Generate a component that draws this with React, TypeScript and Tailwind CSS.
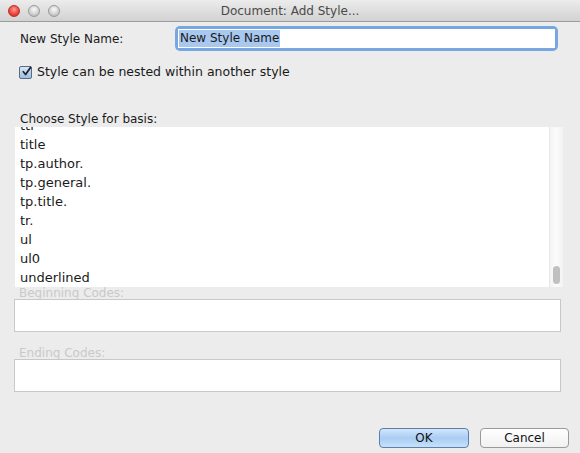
import React from "react";

const ITEMS = ["ttl", "title", "tp.author.", "tp.general.", "tp.title.", "tr.", "ul", "ul0", "underlined"];

function TrafficLight({ color }: { color: "red" | "gray" }) {
  return (
    <span
      className={`block h-[12px] w-[12px] rounded-full border ${
        color === "red"
          ? "border-[#b3312c] bg-[radial-gradient(circle_at_50%_35%,#ff9c94_0%,#f0463c_55%,#c4241c_100%)]"
          : "border-[#9a9a9a] bg-[radial-gradient(circle_at_50%_35%,#fafafa_0%,#d2d2d2_55%,#a9a9a9_100%)]"
      }`}
    />
  );
}

export default function App() {
  return (
    <div className="flex h-[453px] w-[580px] flex-col overflow-hidden bg-[#ececec] font-['DejaVu_Sans',sans-serif] text-[12px] text-[#1a1a1a]">
      {/* title bar */}
      <div className="relative flex h-[22px] shrink-0 items-center border-b border-[#9c9c9c] bg-gradient-to-b from-[#ececec] to-[#d2d2d2]">
        <div className="flex gap-[8px] pl-[8px]">
          <TrafficLight color="red" />
          <TrafficLight color="gray" />
          <TrafficLight color="gray" />
        </div>
        <span className="absolute inset-x-0 text-center text-[12px] text-[#4a4a4a]">Document: Add Style...</span>
      </div>

      <div className="flex flex-1 flex-col px-[14px]">
        {/* name row */}
        <div className="mt-[4px] flex items-center">
          <span className="w-[161px] pl-[6px]">New Style Name:</span>
          <div className="w-[383px] rounded-[5px] bg-[#78a6e0] p-[3px]">
            <div className="flex h-[19px] items-center bg-white pl-[1px]">
              <span className="bg-[#a8c8f0] px-[1px] leading-[17px]">New Style Name</span>
            </div>
          </div>
        </div>

        {/* checkbox */}
        <label className="mt-[12px] flex items-center pl-[5px]">
          <span className="flex h-[13px] w-[13px] items-center justify-center rounded-[2px] border border-[#5a6b82] bg-gradient-to-b from-[#d8e6f6] to-[#9fbde0]">
            <svg viewBox="0 0 12 12" className="h-[13px] w-[13px] -translate-y-[1px] translate-x-[1px]">
              <path d="M2.5 6.2 L5 9.3 L10.5 1.5" fill="none" stroke="#1b2433" strokeWidth="1.9" strokeLinecap="round" strokeLinejoin="round" />
            </svg>
          </span>
          <span className="ml-[5px] text-[12.5px]">Style can be nested within another style</span>
        </label>

        {/* basis list */}
        <span className="mt-[30px] pl-[6px] leading-[15px]">Choose Style for basis:</span>
        <div className="ml-[1px] flex h-[160px] w-[548px] bg-white">
          <div className="flex-1 overflow-hidden">
            <div className="-mt-[11px] pl-[5px] text-[13px]">
              {ITEMS.map((it) => (
                <div key={it} className="h-[19px] leading-[19px]">
                  {it}
                </div>
              ))}
            </div>
          </div>
          <div className="relative w-[14px] border-l border-[#e6e6e6] bg-gradient-to-r from-[#f4f4f4] via-[#fbfbfb] to-[#f2f2f2]">
            <div className="absolute bottom-[3px] left-[3px] h-[18px] w-[7px] rounded-full bg-[#c0c0c0]" />
          </div>
        </div>

        {/* beginning codes */}
        <span className="pl-[5px] leading-[12px] text-[#c9c9c9]">Beginning Codes:</span>
        <div className="h-[33px] w-[547px] border border-[#c8c8c8] bg-white" />

        {/* ending codes */}
        <span className="mt-[15px] pl-[5px] leading-[12px] text-[#c9c9c9]">Ending Codes:</span>
        <div className="h-[33px] w-[547px] border border-[#c8c8c8] bg-white" />

        {/* buttons */}
        <div className="mt-[36px] flex justify-end gap-[11px]">
          <button className="h-[20px] w-[90px] rounded-[4px] border border-[#5e7fa8] bg-gradient-to-b from-[#d3e6fb] via-[#a9cdf3] to-[#c7e1fb] text-[12px] leading-[18px] text-[#111]">
            OK
          </button>
          <button className="mr-[-3px] h-[20px] w-[89px] rounded-[4px] border border-[#9a9a9a] bg-gradient-to-b from-white to-[#f1f1f1] text-[12px] leading-[18px] text-[#111]">
            Cancel
          </button>
        </div>
      </div>
    </div>
  );
}
